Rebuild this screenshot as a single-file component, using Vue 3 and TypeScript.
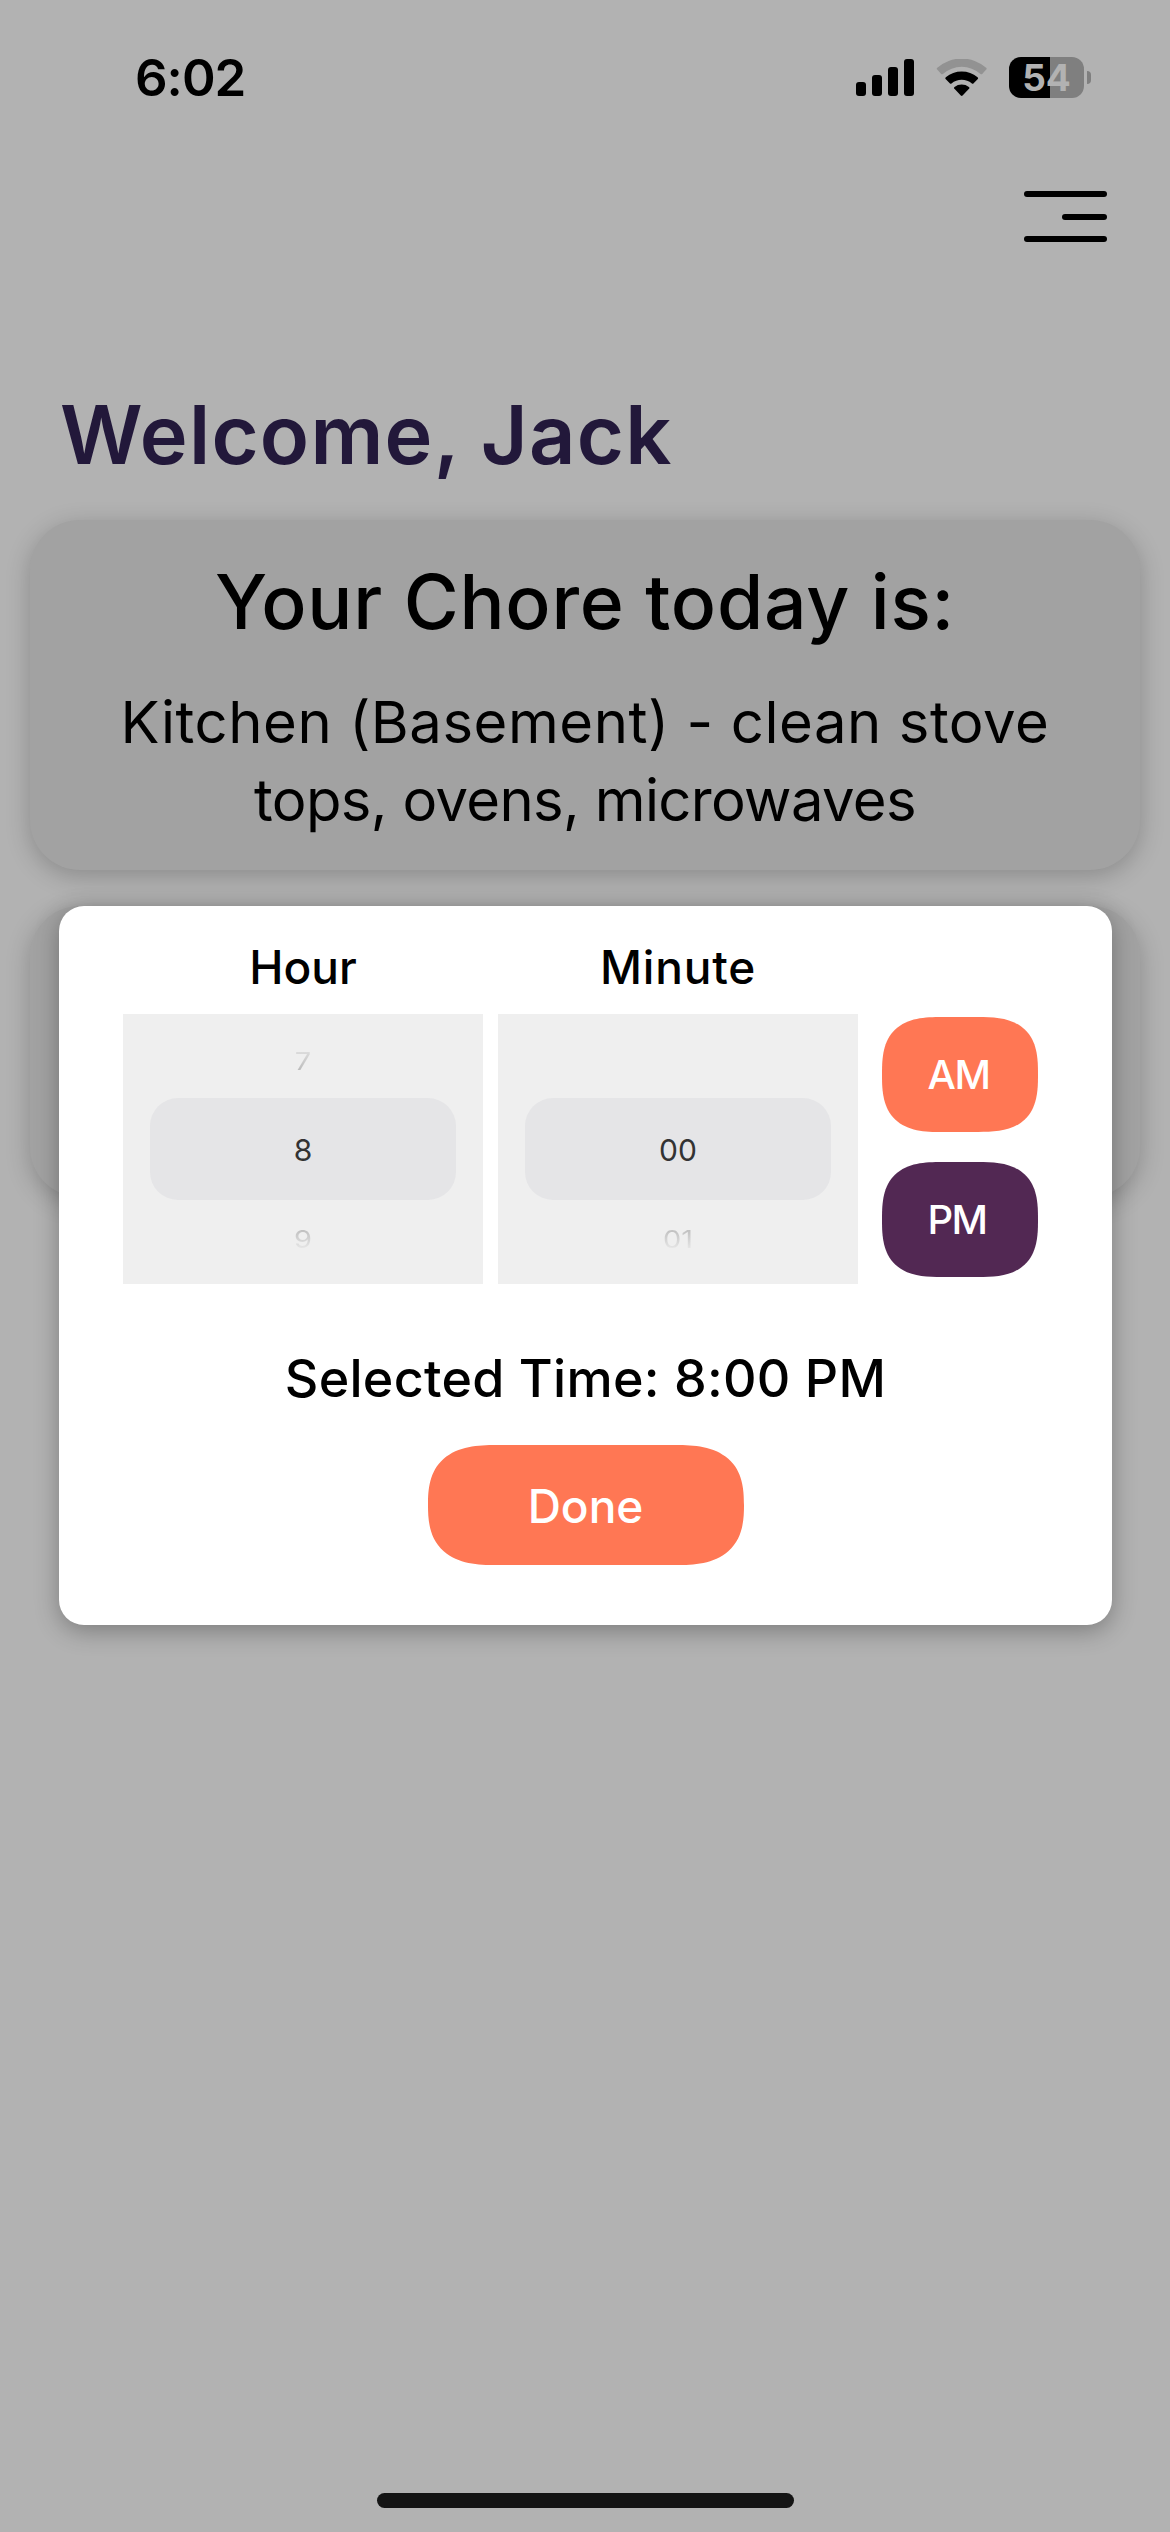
<script setup lang="ts">
import { ref, computed } from 'vue'

type Period = 'AM' | 'PM'

const name = 'Jack'
const chore = ['Kitchen (Basement) - clean stove', 'tops, ovens, microwaves']
const hour = ref(8)
const minute = ref(0)
const period = ref<Period>('PM')
const open = ref(true)

const pad = (n: number) => String(n).padStart(2, '0')

const wheels = computed(() => [
  {
    label: 'Hour',
    key: 'hour',
    prev: hour.value > 1 ? String(hour.value - 1) : '',
    current: String(hour.value),
    next: hour.value < 12 ? String(hour.value + 1) : '',
  },
  {
    label: 'Minute',
    key: 'minute',
    prev: minute.value > 0 ? pad(minute.value - 1) : '',
    current: pad(minute.value),
    next: minute.value < 59 ? pad(minute.value + 1) : '',
  },
])

const selected = computed(() => `${hour.value}:${pad(minute.value)} ${period.value}`)
</script>

<template>
  <div class="screen">
    <header class="status">
      <span class="clock">6:02</span>
      <div class="indicators">
        <svg class="signal" width="58" height="37" viewBox="0 0 58 37">
          <rect x="0" y="23" width="10" height="14" rx="3" />
          <rect x="16" y="16" width="10" height="21" rx="3" />
          <rect x="32" y="8" width="10" height="29" rx="3" />
          <rect x="48" y="0" width="10" height="37" rx="3" />
        </svg>
        <svg class="wifi" width="52" height="38" viewBox="0 0 52 38">
          <path d="M1.2 10.6 Q0.2 9.6 1.3 8.7 A37 37 0 0 1 50.1 8.7 Q51.2 9.6 50.2 10.6 L46.2 14.9 Q45.4 15.6 44.5 14.9 A28.5 28.5 0 0 0 6.9 14.9 Q6 15.6 5.2 14.9 Z" fill="#929292" />
          <path d="M9.6 20 Q8.8 19.2 9.8 18.3 A25 25 0 0 1 41.6 18.3 Q42.6 19.2 41.8 20 L37.4 24.4 Q36.7 25 35.9 24.4 A16 16 0 0 0 15.5 24.4 Q14.7 25 14 24.4 Z" />
          <path d="M18.2 29.4 Q17.6 28.7 18.5 28 A12 12 0 0 1 32.9 28 Q33.8 28.7 33.2 29.4 L26.6 36.6 Q25.7 37.4 24.8 36.6 Z" />
        </svg>
        <div class="battery">
          <div class="cell">54</div>
          <span class="nub"></span>
        </div>
      </div>
    </header>

    <nav class="nav">
      <button class="menu" aria-label="Menu">
        <span></span><span class="short"></span><span></span>
      </button>
    </nav>

    <h1 class="welcome">Welcome, {{ name }}</h1>

    <main class="cards">
      <section class="card chore">
        <h2>Your Chore today is:</h2>
        <p v-for="line in chore" :key="line">{{ line }}</p>
      </section>
      <section class="card reminder"></section>
    </main>

    <div v-if="open" class="modal">
      <div class="pickers">
        <div v-for="w in wheels" :key="w.key" class="column">
          <span class="label" :class="w.key">{{ w.label }}</span>
          <div class="wheel">
            <span class="side">{{ w.prev }}</span>
            <span class="current">{{ w.current }}</span>
            <span class="side next">{{ w.next }}</span>
          </div>
        </div>
        <div class="periods">
          <button class="period am" @click="period = 'AM'">AM</button>
          <button class="period pm" @click="period = 'PM'">PM</button>
        </div>
      </div>
      <p class="selected">Selected Time: {{ selected }}</p>
      <button class="done" @click="open = false">Done</button>
    </div>

    <div class="home"></div>
  </div>
</template>

<style>
body {
  background: #b2b2b2;
}
</style>

<style scoped>
.screen {
  position: relative;
  display: flex;
  flex-direction: column;
  box-sizing: border-box;
  width: 1170px;
  height: 2532px;
  overflow: hidden;
  background: #b2b2b2;
  color: #000;
  font-family: Inter, 'Liberation Sans', sans-serif;
  white-space: nowrap;
}
h1,
h2,
p {
  margin: 0;
}
button {
  border: 0;
  padding: 0;
  font-family: inherit;
}
.status {
  display: flex;
  justify-content: space-between;
  height: 156px;
  box-sizing: border-box;
  padding: 48px 79px 0 135px;
}
.clock {
  height: 60px;
  line-height: 60px;
  font-size: 51px;
  font-weight: 600;
  letter-spacing: -1px;
}
.indicators {
  display: flex;
  align-items: center;
  height: 59px;
}
.wifi {
  margin-left: 22px;
}
.battery {
  display: flex;
  align-items: center;
  gap: 3px;
  margin-left: 21px;
}
.cell {
  width: 75px;
  height: 41px;
  border-radius: 12px;
  background: linear-gradient(90deg, #000 41px, #7f7f7f 41px);
  color: #b2b2b2;
  font-size: 37px;
  font-weight: 700;
  line-height: 41px;
  text-align: center;
}
.nub {
  width: 4px;
  height: 13px;
  border-radius: 0 5px 5px 0;
  background: #7f7f7f;
}
.nav {
  display: flex;
  justify-content: flex-end;
  height: 224px;
  box-sizing: border-box;
  padding: 35px 63px 0 0;
}
.menu {
  display: flex;
  flex-direction: column;
  align-items: flex-end;
  justify-content: space-between;
  width: 83px;
  height: 51px;
  background: none;
}
.menu span {
  width: 83px;
  height: 6px;
  border-radius: 3px;
  background: #000;
}
.menu .short {
  width: 45px;
}
.welcome {
  margin-left: 60px;
  height: 111px;
  line-height: 111px;
  font-size: 81px;
  font-weight: 600;
  letter-spacing: 1.25px;
  color: #22183a;
}
.cards {
  display: flex;
  flex-direction: column;
  gap: 36px;
  margin: 29px 30px 0;
}
.card {
  box-sizing: border-box;
  border-radius: 50px;
  background: #a2a2a2;
  box-shadow: 0 6px 24px rgba(0, 0, 0, 0.22);
  text-align: center;
}
.chore {
  height: 350px;
  padding-top: 31px;
}
.chore h2 {
  height: 101px;
  line-height: 101px;
  font-size: 75px;
  font-weight: 500;
  letter-spacing: 0.75px;
}
.chore p {
  height: 78px;
  line-height: 78px;
  font-size: 58px;
  font-weight: 400;
  letter-spacing: -0.65px;
}
.chore h2 + p {
  margin-top: 31px;
  letter-spacing: 0.55px;
}
.reminder {
  height: 291px;
}
.modal {
  position: absolute;
  left: 59px;
  top: 906px;
  display: flex;
  flex-direction: column;
  align-items: center;
  box-sizing: border-box;
  width: 1053px;
  height: 719px;
  border-radius: 25px;
  background: #fff;
  box-shadow: 0 6px 24px rgba(0, 0, 0, 0.3);
}
.pickers {
  display: flex;
  align-self: flex-start;
  gap: 15px;
  margin-left: 64px;
}
.column {
  display: flex;
  flex-direction: column;
  align-items: center;
  width: 360px;
}
.label {
  height: 108px;
  line-height: 123px;
  font-size: 46px;
  font-weight: 500;
}
.label.minute {
  letter-spacing: 0.8px;
}
.wheel {
  display: flex;
  flex-direction: column;
  align-items: center;
  justify-content: center;
  width: 360px;
  height: 270px;
  background: #efefef;
}
.current {
  width: 306px;
  height: 102px;
  border-radius: 28px;
  background: #e5e5e7;
  color: #333;
  font-size: 30px;
  line-height: 104px;
  text-align: center;
}
.side {
  height: 76px;
  line-height: 79px;
  font-size: 29px;
  transform: scaleY(0.84);
  color: transparent;
  background: linear-gradient(180deg, #dedede 35%, #bdbdbd 65%);
  background-clip: text;
}
.side.next {
  background-image: linear-gradient(180deg, #bdbdbd 35%, #e4e4e4 65%);
  background-clip: text;
}
.periods {
  display: flex;
  flex-direction: column;
  gap: 30px;
  margin: 111px 0 0 9px;
}
.period {
  width: 156px;
  height: 115px;
  padding-right: 3px;
  border-radius: 45px;
  color: #fff;
  font-size: 40px;
  font-weight: 500;
  letter-spacing: -1.5px;
}
.am {
  background: #ff7754;
}
.pm {
  background: #522853;
  padding-right: 6px;
}
.selected {
  margin-top: 55px;
  height: 80px;
  line-height: 80px;
  font-size: 52px;
  font-weight: 500;
  letter-spacing: 0.28px;
}
.done {
  margin-top: 26px;
  width: 316px;
  height: 120px;
  padding-top: 2px;
  border-radius: 50px;
  background: #ff7754;
  color: #fff;
  font-size: 46px;
  font-weight: 500;
}
@supports (corner-shape: superellipse(1.5)) {
  .period {
    border-radius: 60px / 57px;
    corner-shape: superellipse(1.48);
  }
  .done {
    border-radius: 68px / 60px;
    corner-shape: superellipse(1.4);
  }
}
.home {
  position: absolute;
  left: 377px;
  bottom: 24px;
  width: 417px;
  height: 15px;
  border-radius: 8px;
  background: #141414;
}
</style>
